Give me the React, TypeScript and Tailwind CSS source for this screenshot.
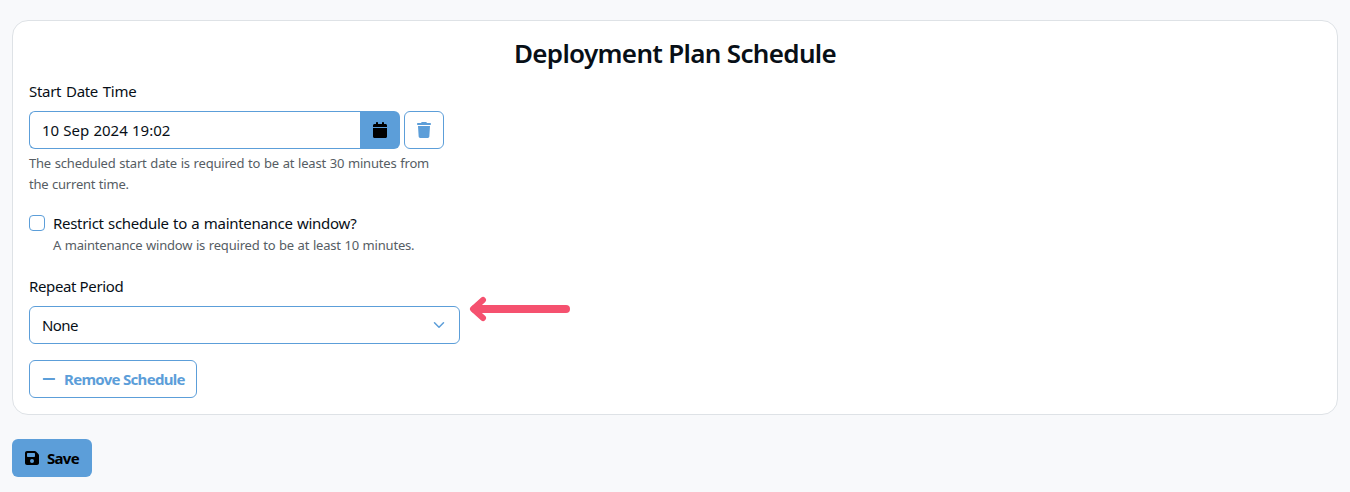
import { FaCalendar, FaFloppyDisk, FaTrash } from "react-icons/fa6";

export default function App() {
  return (
    <main className="h-[492px] overflow-hidden bg-[#f8f9fb] px-3 pt-5 font-['Noto_Sans',sans-serif] text-[15px] leading-6 text-[#080f17]">
      <section className="h-[395px] rounded-2xl border border-[#dee2e6] bg-white px-4 pt-4">
        <h1 className="text-center text-[26px] leading-[33px] font-semibold">
          <span className="inline-block whitespace-nowrap tracking-[-0.67px]">Deployment Plan Schedule</span>
        </h1>
        <div className="mt-[9px]">
          <label htmlFor="start" className="block"><span className="tracking-[-0.3px] [word-spacing:1.2px]">Start Date Time</span></label>
          <div className="mt-2 flex gap-1">
            <div className="flex h-[38px] w-[371px]">
              <div id="start" className="flex flex-1 items-center rounded-l-md border border-r-0 border-[#5c9ed9] pl-3">
                <span className="tracking-[0.02px] [word-spacing:0.2px]">10 Sep 2024 19:02</span>
              </div>
              <button aria-label="Pick date" className="flex w-10 items-center justify-center rounded-r-md bg-[#5c9ed9] text-black">
                <FaCalendar size={16} />
              </button>
            </div>
            <button aria-label="Clear date" className="flex h-[38px] w-10 items-center justify-center rounded-md border border-[#5c9ed9] text-[#5c9ed9]">
              <FaTrash size={16} />
            </button>
          </div>
          <p className="mt-1 text-[13px] leading-[21px] text-[#565d64]">
            <span className="tracking-[-0.2px] [word-spacing:0.6px]">The scheduled start date is required to be at least 30 minutes from</span>
            <br />
            <span className="tracking-[-0.2px] [word-spacing:0.3px]">the current time.</span>
          </p>
        </div>
        <div className="mt-4 flex gap-2">
          <input type="checkbox" className="mt-1 size-4 appearance-none rounded-[4px] border border-[#5c9ed9]" />
          <div>
            <div><span className="tracking-[-0.3px] [word-spacing:0.8px]">Restrict schedule to a maintenance window?</span></div>
            <div className="text-[13px] leading-[21px] text-[#565d64]"><span className="tracking-[-0.2px] [word-spacing:0.5px]">A maintenance window is required to be at least 10 minutes.</span></div>
          </div>
        </div>
        <div className="mt-[18px]"><span className="tracking-[-0.37px]">Repeat Period</span></div>
        <div className="mt-2 flex h-[38px] w-[431px] items-center justify-between rounded-md border border-[#5c9ed9] pr-[14px] pl-3">
          <span className="tracking-[-0.6px]">None</span>
          <svg width="12" height="12" viewBox="0 0 16 16" fill="none" stroke="#5c9ed9" strokeWidth="2" strokeLinecap="round" strokeLinejoin="round">
            <path d="m2 5 6 6 6-6" />
          </svg>
        </div>
        <button className="mt-4 flex h-[38px] w-[168px] items-center gap-2 rounded-md border border-[#5c9ed9] pl-3 font-bold text-[#5c9ed9]">
          <svg width="14" height="14" viewBox="0 0 14 14" className="shrink-0">
            <rect x="0.8" y="6" width="12.4" height="2" rx="0.8" fill="currentColor" />
          </svg>
          <span className="whitespace-nowrap tracking-[-0.7px]">Remove Schedule</span>
        </button>
      </section>
      <button className="mt-6 flex h-[38px] w-20 items-center gap-[7px] rounded-md bg-[#5c9ed9] pl-3 font-bold text-black">
        <FaFloppyDisk size={16} className="shrink-0" />
        <span className="tracking-[-0.7px]">Save</span>
      </button>
      <svg className="absolute top-[296px] left-[469px]" width="102" height="26" viewBox="0 0 102 26" fill="none" stroke="#f5516f" strokeLinecap="round" strokeLinejoin="round">
        <path d="M6 13h91" strokeWidth="8" />
        <path d="M14 4 4 13l10 9" strokeWidth="6" />
      </svg>
    </main>
  );
}
